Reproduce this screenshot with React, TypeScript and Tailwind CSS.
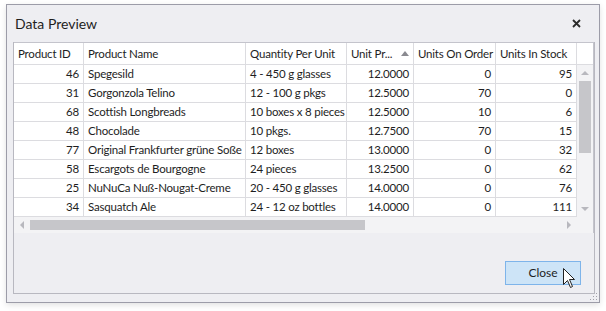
import React from 'react';

type Product = {
    id: number,
    name: string,
    qty: string,
    price: string,
    onOrder: number,
    inStock: number,
}

const rows: Product[] = [
    { id: 46, name: 'Spegesild', qty: '4 - 450 g glasses', price: '12.0000', onOrder: 0, inStock: 95 },
    { id: 31, name: 'Gorgonzola Telino', qty: '12 - 100 g pkgs', price: '12.5000', onOrder: 70, inStock: 0 },
    { id: 68, name: 'Scottish Longbreads', qty: '10 boxes x 8 pieces', price: '12.5000', onOrder: 10, inStock: 6 },
    { id: 48, name: 'Chocolade', qty: '10 pkgs.', price: '12.7500', onOrder: 70, inStock: 15 },
    { id: 77, name: 'Original Frankfurter grüne Soße', qty: '12 boxes', price: '13.0000', onOrder: 0, inStock: 32 },
    { id: 58, name: 'Escargots de Bourgogne', qty: '24 pieces', price: '13.2500', onOrder: 0, inStock: 62 },
    { id: 25, name: 'NuNuCa Nuß-Nougat-Creme', qty: '20 - 450 g glasses', price: '14.0000', onOrder: 0, inStock: 76 },
    { id: 34, name: 'Sasquatch Ale', qty: '24 - 12 oz bottles', price: '14.0000', onOrder: 0, inStock: 111 },
]

const cols = 'grid grid-cols-[70px_162px_101px_67px_82px_81px_16px]'
const cell = 'h-[19px] leading-[18px] border-r border-b border-[#dcdce0] px-[4px] whitespace-nowrap overflow-hidden'
const head = 'h-[22px] leading-[21px] border-r border-b border-[#dcdce0] px-[4px] whitespace-nowrap overflow-hidden'

const Arrow = ({ dir }: { dir: 'up' | 'down' | 'left' | 'right' }) => {
    const pts = {
        up: '0,5 4,1 8,5',
        down: '0,1 4,5 8,1',
        left: '5,0 1,4 5,8',
        right: '1,0 5,4 1,8',
    }[dir]
    const w = dir === 'up' || dir === 'down' ? 8 : 6
    const h = dir === 'up' || dir === 'down' ? 6 : 8
    return (
        <svg width={w} height={h} viewBox={`0 0 ${w} ${h}`}>
            <polygon points={pts} fill="#b8b8be" />
        </svg>
    )
}

const App = () => {
    return (
        <div className="w-[606px] h-[311px] bg-white pt-[4px] pl-[6px] text-[#1e1e1e]" style={{ fontFamily: 'Lato, "Open Sans", sans-serif' }}>
            <div className="relative w-[594px] h-[299px] border border-[#9c9ca8] bg-[#eeeef2] shadow-[0_2px_6px_rgba(0,0,0,0.12)] flex flex-col">
                <div className="h-[37px] flex items-center justify-between pl-[8px] pr-[18px]">
                    <span className="text-[14px]">Data Preview</span>
                    <svg width="9" height="9" viewBox="0 0 9 9">
                        <path d="M1 1 L8 8 M8 1 L1 8" stroke="#2a2a2a" strokeWidth="1.8" />
                    </svg>
                </div>
                <div className="ml-[6px] w-[582px] h-[252px] border-l border-r border-b border-[#b8b8c0] flex flex-col">
                    <div className="border-t border-r border-[#c4c4cc] bg-white text-[11.5px] tracking-[-0.2px] w-[580px]">
                        <div className={cols}>
                            <div className={head}>Product ID</div>
                            <div className={head}>Product Name</div>
                            <div className={head}>Quantity Per Unit</div>
                            <div className={head + ' flex items-center justify-between'}>
                                <span>Unit Pr...</span>
                                <svg width="8" height="5" viewBox="0 0 8 5"><polygon points="0,5 4,0 8,5" fill="#8a8a90" /></svg>
                            </div>
                            <div className={head}>Units On Order</div>
                            <div className={head}>Units In Stock</div>
                            <div className="h-[22px] border-b border-[#dcdce0]"></div>
                        </div>
                        <div className="flex">
                            <div className="w-[563px]">
                                {rows.map((r) => (
                                    <div key={r.id} className="grid grid-cols-[70px_162px_101px_67px_82px_81px]">
                                        <div className={cell + ' text-right'}>{r.id}</div>
                                        <div className={cell}>{r.name}</div>
                                        <div className={cell}>{r.qty}</div>
                                        <div className={cell + ' text-right'}>{r.price}</div>
                                        <div className={cell + ' text-right'}>{r.onOrder}</div>
                                        <div className={cell + ' text-right'}>{r.inStock}</div>
                                    </div>
                                ))}
                            </div>
                            <div className="w-[16px] h-[152px] bg-[#f3f3f5] flex flex-col items-center">
                                <div className="h-[16px] flex items-center justify-center"><Arrow dir="up" /></div>
                                <div className="w-full px-[2px] flex-1">
                                    <div className="h-[72px] bg-[#c6c6ca]"></div>
                                </div>
                                <div className="h-[16px] flex items-center justify-center"><Arrow dir="down" /></div>
                            </div>
                        </div>
                        <div className="flex h-[16px]">
                            <div className="w-[563px] bg-[#f3f3f5] flex items-center">
                                <div className="w-[16px] flex items-center justify-center"><Arrow dir="left" /></div>
                                <div className="flex-1 py-[3px] h-full">
                                    <div className="w-[335px] h-full bg-[#c6c6ca]"></div>
                                </div>
                                <div className="w-[16px] flex items-center justify-center"><Arrow dir="right" /></div>
                            </div>
                            <div className="w-[16px] bg-[#f3f3f5]"></div>
                        </div>
                    </div>
                    <div className="flex-1 flex items-end justify-end pr-[13px] pb-[8px]">
                        <div className="relative">
                            <button className="w-[76px] h-[24px] border border-[#7eb4ea] bg-[#cde4f7] text-[12px] leading-[22px] text-center">Close</button>
                            <svg className="absolute left-[58px] top-[9px]" width="13" height="21" viewBox="0 0 13 21">
                                <path d="M0.5 0.5 L0.5 16.5 L4.5 12.5 L7.5 19.5 L9.5 18.5 L6.5 11.5 L11.5 11.5 Z" fill="#ffffff" stroke="#222" strokeWidth="1" strokeLinejoin="round" />
                            </svg>
                        </div>
                    </div>
                </div>
                <svg className="absolute right-[1px] bottom-[1px]" width="8" height="8" viewBox="0 0 8 8">
                    <rect x="6" y="0" width="1" height="1" fill="#a0a0a8" />
                    <rect x="3" y="3" width="1" height="1" fill="#a0a0a8" />
                    <rect x="6" y="3" width="1" height="1" fill="#a0a0a8" />
                    <rect x="0" y="6" width="1" height="1" fill="#a0a0a8" />
                    <rect x="3" y="6" width="1" height="1" fill="#a0a0a8" />
                    <rect x="6" y="6" width="1" height="1" fill="#a0a0a8" />
                </svg>
            </div>
        </div>
    );
}

export default App;
